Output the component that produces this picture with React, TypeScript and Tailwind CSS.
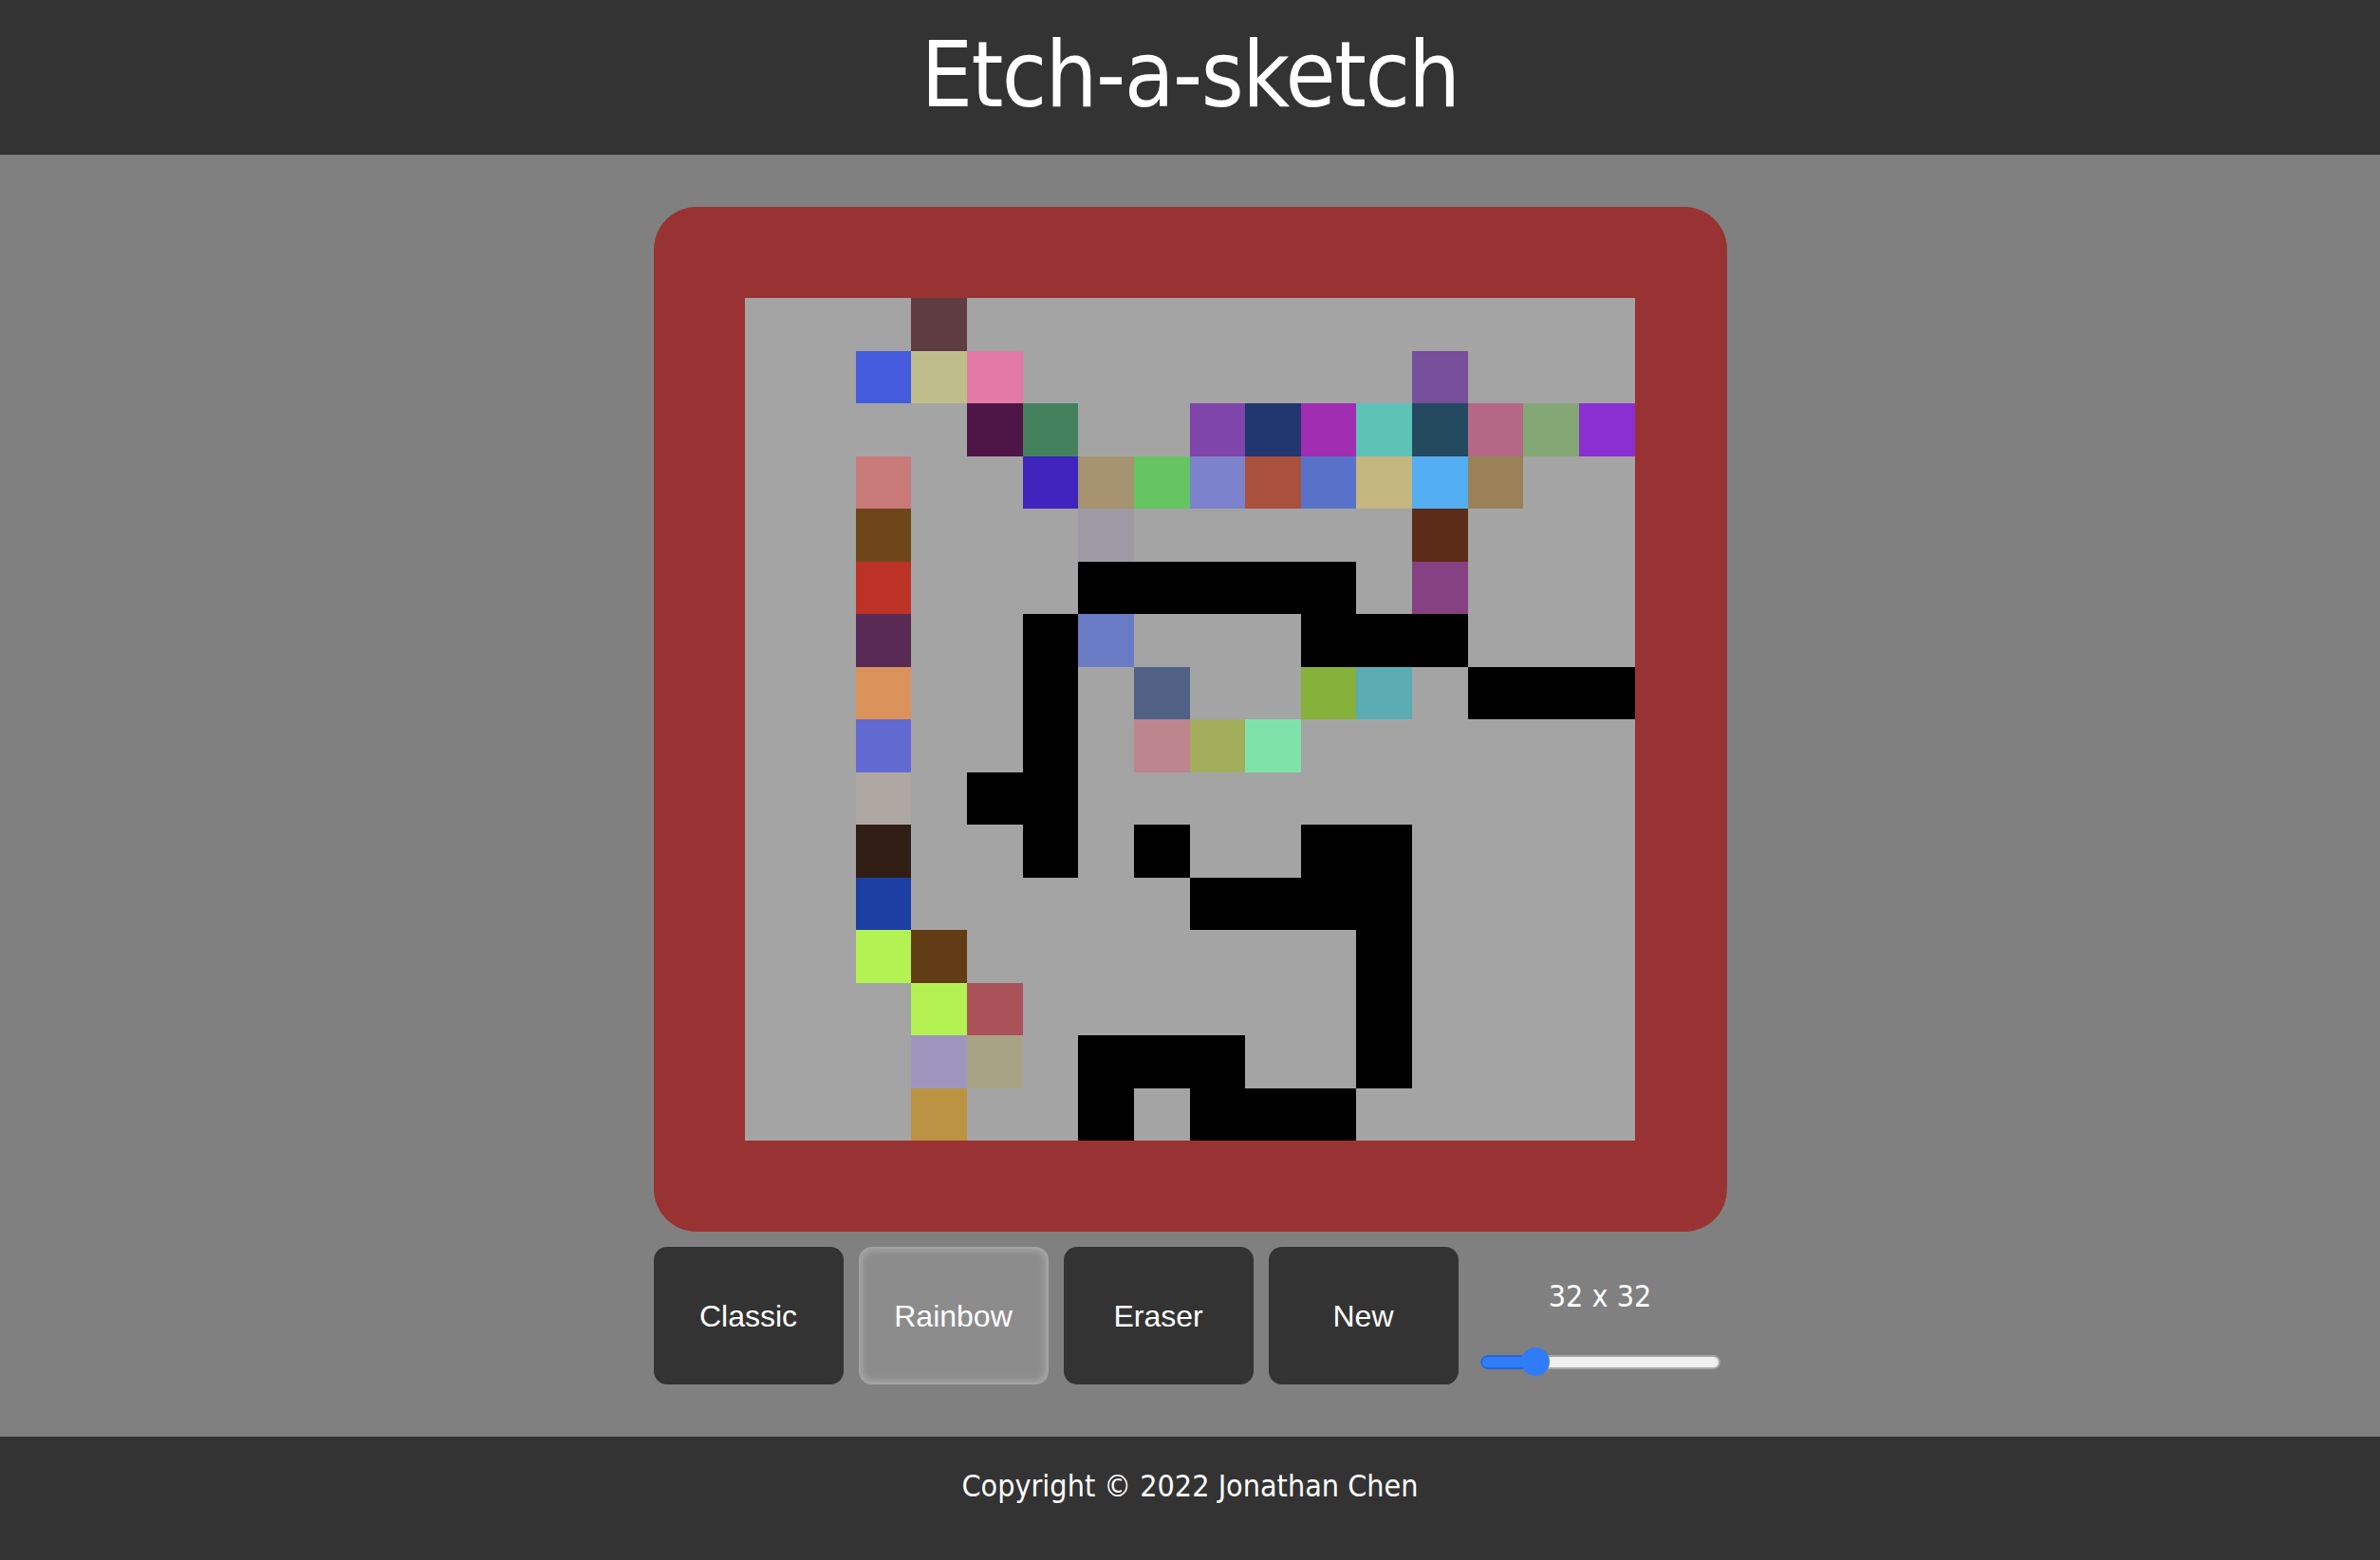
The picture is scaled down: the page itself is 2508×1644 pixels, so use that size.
import { FC } from "react";

// painted cells of the 16 x 16 board, "k" = black pen, everything else is rainbow ink
type Painted = Record<number, string>;

const paintedRows: Painted[] = [
  { 3: "#5e3c42" },
  { 2: "#445bdd", 3: "#bfbd8c", 4: "#e27aa5", 12: "#774e9a" },
  {
    4: "#4d1646",
    5: "#43825d",
    8: "#7f45aa",
    9: "#22376f",
    10: "#a02db2",
    11: "#5ec2b6",
    12: "#244a60",
    13: "#b46886",
    14: "#84a776",
    15: "#8b2fd2",
  },
  {
    2: "#c87b79",
    5: "#3f24bd",
    6: "#a6936f",
    7: "#66c462",
    8: "#7c82cb",
    9: "#aa503f",
    10: "#5872ca",
    11: "#c4b77f",
    12: "#54aef2",
    13: "#9a8157",
  },
  { 2: "#6e4619", 6: "#9e9ba6", 12: "#5b2d18" },
  { 2: "#bd3226", 6: "k", 7: "k", 8: "k", 9: "k", 10: "k", 12: "#864183" },
  { 2: "#5a2a57", 5: "k", 6: "#6a7bc6", 10: "k", 11: "k", 12: "k" },
  {
    2: "#db935c",
    5: "k",
    7: "#516185",
    10: "#86b13a",
    11: "#5bacb3",
    13: "k",
    14: "k",
    15: "k",
  },
  { 2: "#626ad1", 5: "k", 7: "#bd868e", 8: "#a2ae5c", 9: "#7fe3a9" },
  { 2: "#afa7a2", 4: "k", 5: "k" },
  { 2: "#311f16", 5: "k", 7: "k", 10: "k", 11: "k" },
  { 2: "#1b3fa3", 8: "k", 9: "k", 10: "k", 11: "k" },
  { 2: "#b3f252", 3: "#623c15", 11: "k" },
  { 3: "#b3f252", 4: "#a9525a", 11: "k" },
  { 3: "#a095bf", 4: "#a9a386", 6: "k", 7: "k", 8: "k", 11: "k" },
  { 3: "#bc9243", 6: "k", 8: "k", 9: "k", 10: "k" },
];

const tahoma = "font-['DejaVu_Sans_Condensed','DejaVu_Sans',sans-serif]";

const Board: FC = () => {
  return (
    <div className="w-[1131px] rounded-[45px] bg-[#993333] p-[96px]">
      <div className="grid h-[888px] w-[938px] grid-cols-16 grid-rows-16 bg-[#a4a4a4]">
        {paintedRows.map((row, r) =>
          Array.from({ length: 16 }).map((_, c) => {
            const ink = row[c];
            return (
              <div
                key={`${r}-${c}`}
                style={
                  ink ? { backgroundColor: ink === "k" ? "#000" : ink } : undefined
                }
              />
            );
          })
        )}
      </div>
    </div>
  );
};

interface ModeBtnProps {
  label: string;
  active?: boolean;
}

const ModeBtn: FC<ModeBtnProps> = ({ label, active }) => {
  return (
    <button
      className={
        active
          ? "flex h-[145px] w-[200px] items-center justify-center rounded-[14px] border-2 border-[#a3a3a3] bg-[#8c8c8c] font-['Liberation_Sans',Arial,sans-serif] text-[32px] text-white shadow-[inset_0_0_8px_rgba(255,255,255,0.35)]"
          : "flex h-[145px] w-[200px] items-center justify-center rounded-[14px] bg-[#333333] font-['Liberation_Sans',Arial,sans-serif] text-[32px] text-white"
      }
    >
      {label}
    </button>
  );
};

const SizeSlider: FC = () => {
  return (
    <div className="flex flex-1 flex-col items-center pt-[32px]">
      <span className={`${tahoma} text-[32px] leading-[40px] text-white`}>
        32 x 32
      </span>
      <div className="relative mt-[34px] flex h-[30px] w-[253px] items-center">
        <div className="h-[15px] w-full rounded-full border-2 border-[#a6a6a6] bg-[#efefef]" />
        <div className="absolute left-0 top-[7.5px] h-[15px] w-[60px] rounded-full border-2 border-[#2766d6] bg-[#2f7cf6]" />
        <div className="absolute left-[43px] top-0 h-[30px] w-[30px] rounded-full bg-[#2f7cf6]" />
      </div>
    </div>
  );
};

const App: FC = () => {
  return (
    <div className="flex min-h-[1644px] w-full flex-col bg-[#808080]">
      <header className="flex h-[163px] items-center justify-center bg-[#333333] pb-[6px]">
        <h1
          className={`${tahoma} text-[96px] leading-[112px] tracking-[-1.5px] text-white`}
        >
          Etch-a-sketch
        </h1>
      </header>

      <main className="flex flex-1 flex-col items-center pt-[55px] pb-[55px]">
        <Board />
        <div className="mt-4 flex w-[1131px] gap-4">
          <ModeBtn label="Classic" />
          <ModeBtn label="Rainbow" active />
          <ModeBtn label="Eraser" />
          <ModeBtn label="New" />
          <SizeSlider />
        </div>
      </main>

      <footer className="flex h-[130px] justify-center bg-[#333333] pt-[32px]">
        <p className={`${tahoma} text-[32px] leading-[40px] text-white`}>
          Copyright © 2022 Jonathan Chen
        </p>
      </footer>
    </div>
  );
};

export default App;
